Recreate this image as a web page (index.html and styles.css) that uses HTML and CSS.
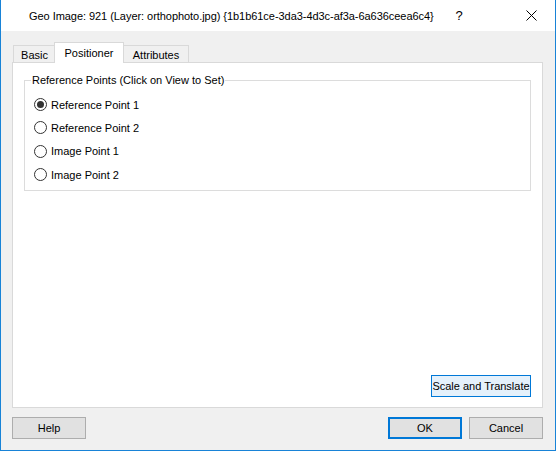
FILE: index.html
```html
<!DOCTYPE html>
<html lang="en">
<head>
    <meta charset="UTF-8">
    <title>Geo Image</title>
    <link rel="stylesheet" href="styles.css">
</head>
<body>
    <div class="window">
        <div class="titlebar">
            <div class="title">Geo Image: 921 (Layer: orthophoto.jpg) {1b1b61ce-3da3-4d3c-af3a-6a636ceea6c4}</div>
            <div class="caption-btn help-btn">?</div>
            <div class="caption-btn close-btn">
                <svg width="11" height="11" viewBox="0 0 11 11">
                    <path d="M0.5 0.5 L10.5 10.5 M10.5 0.5 L0.5 10.5" stroke="#000" stroke-width="1" fill="none"/>
                </svg>
            </div>
        </div>

        <div class="client">
            <div class="tabs">
                <div class="tab tab-basic">Basic</div>
                <div class="tab tab-active">Positioner</div>
                <div class="tab tab-attr">Attributes</div>
            </div>

            <div class="panel">
                <fieldset class="group">
                    <legend>Reference Points (Click on View to Set)</legend>
                    <label class="radio"><span class="dot checked"></span>Reference Point 1</label>
                    <label class="radio"><span class="dot"></span>Reference Point 2</label>
                    <label class="radio"><span class="dot"></span>Image Point 1</label>
                    <label class="radio"><span class="dot"></span>Image Point 2</label>
                </fieldset>
                <button class="btn btn-focus">Scale and Translate</button>
            </div>

            <div class="footer">
                <button class="btn btn-wide">Help</button>
                <div class="spacer"></div>
                <button class="btn btn-wide btn-default">OK</button>
                <button class="btn btn-wide">Cancel</button>
            </div>
        </div>
    </div>
</body>
</html>
```

FILE: styles.css
```css
* {
    margin: 0;
    padding: 0;
    box-sizing: border-box;
}

body {
    font-family: "Liberation Sans", Arial, sans-serif;
    font-size: 11px;
    color: #000;
    background: #fff;
}

.window {
    width: 556px;
    height: 451px;
    border: 1px solid #1883d7;
    border-top: none;
    background: #f0f0f0;
    display: flex;
    flex-direction: column;
}

/* Caption bar */
.titlebar {
    height: 31px;
    background: #fff;
    display: flex;
    align-items: center;
    padding-left: 28px;
}

.title {
    white-space: nowrap;
    letter-spacing: -0.05px;
}

.caption-btn {
    width: 46px;
    display: flex;
    justify-content: center;
}

.help-btn {
    font-size: 13px;
    margin-left: auto;
    margin-right: 26px;
}

.close-btn {
    margin-right: 1px;
}

/* Dialog body */
.client {
    flex: 1;
    padding: 11px 12px 0 11px;
    display: flex;
    flex-direction: column;
}

.tabs {
    display: flex;
    align-items: flex-end;
    height: 20px;
    padding-left: 1px;
    position: relative;
    z-index: 1;
}

.tab {
    border: 1px solid #d9d9d9;
    border-bottom: none;
    background: #f0f0f0;
    height: 17px;
    padding-top: 3px;
    text-align: center;
}

.tab-basic {
    width: 43px;
}

.tab-active {
    width: 70px;
    height: 21px;
    margin-bottom: -1px;
    margin-left: -2px;
    background: #fff;
    padding-top: 4px;
}

.tab-attr {
    width: 66px;
    margin-left: -1px;
}

.panel {
    height: 346px;
    background: #fff;
    border: 1px solid #d9d9d9;
    padding: 11px 11px 10px 11px;
    display: flex;
    flex-direction: column;
    justify-content: space-between;
}

.group {
    height: 117px;
    border: 1px solid #dcdcdc;
    padding: 7px 0 0 9px;
}

.group legend {
    padding: 0 1px;
    margin-left: -3px;
}

.radio {
    display: flex;
    align-items: center;
    height: 23.3px;
}

.dot {
    width: 13px;
    height: 13px;
    border: 1px solid #333;
    border-radius: 50%;
    margin-right: 4px;
    display: flex;
    align-items: center;
    justify-content: center;
}

.dot.checked::after {
    content: '';
    width: 7px;
    height: 7px;
    border-radius: 50%;
    background: #333;
}

/* Push buttons */
.btn {
    font-family: inherit;
    font-size: 11px;
    color: #000;
    background: #e1e1e1;
    border: 1px solid #adadad;
    height: 22px;
    white-space: nowrap;
}

.btn-focus {
    align-self: flex-end;
    width: 100px;
    background: #e5f1fb;
    border-color: #0078d7;
}

.footer {
    display: flex;
    padding-top: 9px;
    gap: 7px;
}

.spacer {
    flex: 1;
}

.btn-wide {
    width: 74px;
}

.btn-default {
    border: 2px solid #0078d7;
}
```
